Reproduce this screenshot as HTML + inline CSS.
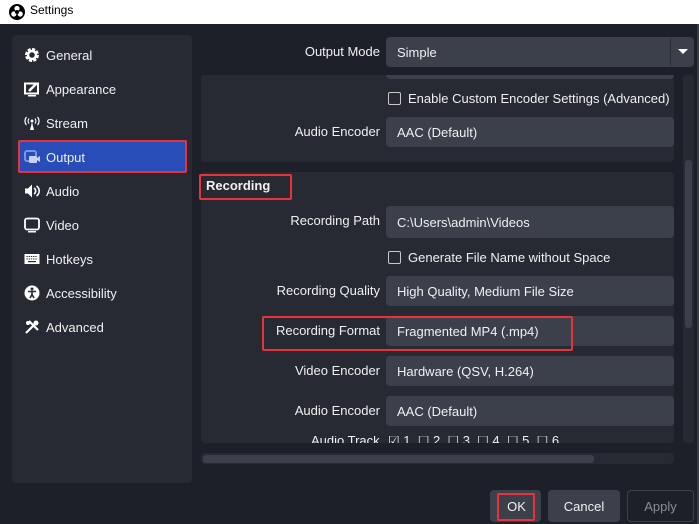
<!DOCTYPE html>
<html><head><style>
*{margin:0;padding:0;box-sizing:border-box}
body{width:699px;height:524px;background:#1e2029;font-family:"Liberation Sans",sans-serif;font-size:13px;color:#f0f0f0;position:relative;overflow:hidden}
.a{position:absolute}
.tb{left:0;top:0;width:699px;height:24px;background:#fff;color:#000;font-size:12px}
.side{left:12px;top:35px;width:180px;height:448px;background:#272a33;border-radius:4px}
.it{position:absolute;left:46px;font-size:13px}
.ic{position:absolute;left:24px;width:16px;height:16px}
.in{background:#3c404b;border-radius:4px;height:30px;padding-left:11px;line-height:30px;font-size:13px}
.lb{text-align:right;width:180px;left:200px;font-size:13px}
.grp{background:#272a33;border-radius:4px}
.cb{width:13px;height:13px;border:1px solid #c8c8c8;border-radius:2px}
.red{border:2px solid #e8333a;border-radius:2px}
.btn{background:#3c404b;border-radius:4px;text-align:center;line-height:34px;height:32px;top:490px}
</style></head><body>
<div class="a tb"><svg class="a" style="left:9px;top:4px" width="16" height="16" viewBox="0 0 16 16"><circle cx="8" cy="8" r="8" fill="#000"/><circle cx="8" cy="4.5" r="2.6" fill="#fff"/><circle cx="4.8" cy="10" r="2.6" fill="#fff"/><circle cx="11.2" cy="10" r="2.6" fill="#fff"/><circle cx="8" cy="8" r="2" fill="#000"/></svg><span class="a" style="left:30px;top:3px">Settings</span></div>
<div class="a side"></div>
<div class="a" style="left:18px;top:140px;width:169px;height:33px;background:#284cb8;border-radius:3px"></div>
<div class="a red" style="left:18px;top:140px;width:169px;height:33px"></div>
<svg class="ic" style="top:47px" viewBox="0 0 16 16"><circle cx="8" cy="8" r="5.5" fill="none" stroke="#fff" stroke-width="3" stroke-dasharray="3 1.3"/><circle cx="8" cy="8" r="4" fill="none" stroke="#fff" stroke-width="2.5"/></svg><span class="it" style="top:48px">General</span>
<svg class="ic" style="top:81px" viewBox="0 0 16 16"><rect x="1" y="2.5" width="13" height="10" fill="none" stroke="#fff" stroke-width="2"/><rect x="4" y="14" width="8" height="1.5" fill="#fff"/><path d="M5 10 L12 3" stroke="#fff" stroke-width="2.5"/></svg><span class="it" style="top:82px">Appearance</span>
<svg class="ic" style="top:115px" viewBox="0 0 16 16"><path d="M8 7 L6 15 H10 Z" fill="#fff"/><circle cx="8" cy="6" r="1.5" fill="#fff"/><path d="M5 3.5a4 4 0 0 0 0 5M11 3.5a4 4 0 0 1 0 5M2.5 2a6 6 0 0 0 0 8M13.5 2a6 6 0 0 1 0 8" stroke="#fff" fill="none" stroke-width="1.2"/></svg><span class="it" style="top:116px">Stream</span>
<svg class="ic" style="top:149px" viewBox="0 0 16 16"><rect x="1" y="2" width="11" height="10" rx="2" fill="none" stroke="#7b95e6" stroke-width="2"/><rect x="5" y="7" width="8" height="7" rx="1" fill="#c7d2f2"/><path d="M13 9l3-2v6l-3-2z" fill="#c7d2f2"/></svg><span class="it" style="top:150px">Output</span>
<svg class="ic" style="top:183px" viewBox="0 0 16 16"><path d="M1 5.5h3l4-4v13l-4-4H1z" fill="#fff"/><path d="M10 5a3.5 3.5 0 0 1 0 6M12.5 3a6 6 0 0 1 0 10" stroke="#fff" fill="none" stroke-width="1.6"/></svg><span class="it" style="top:184px">Audio</span>
<svg class="ic" style="top:217px" viewBox="0 0 16 16"><rect x="1" y="1.5" width="14" height="11" rx="2" fill="none" stroke="#fff" stroke-width="1.8"/><rect x="4" y="14" width="8" height="1.5" fill="#fff"/></svg><span class="it" style="top:218px">Video</span>
<svg class="ic" style="top:251px" viewBox="0 0 16 16"><rect x="0.5" y="3" width="15" height="10" fill="#fff"/><path d="M2.5 5.5h11M2.5 8h11" stroke="#272a33" stroke-dasharray="1.3 0.9"/><rect x="4" y="10" width="8" height="1.2" fill="#272a33"/></svg><span class="it" style="top:252px">Hotkeys</span>
<svg class="ic" style="top:285px" viewBox="0 0 16 16"><circle cx="8" cy="8" r="7.5" fill="#fff"/><circle cx="8" cy="4" r="1.5" fill="#272a33"/><path d="M4 6.5h8M8 6.5v3l-2 3.5M8 9.5l2 3.5" stroke="#272a33" stroke-width="1.6" fill="none"/></svg><span class="it" style="top:286px">Accessibility</span>
<svg class="ic" style="top:319px" viewBox="0 0 16 16"><path d="M2 14L11 5M5 2l9 9" stroke="#fff" stroke-width="2.2"/><circle cx="12" cy="4" r="2.5" fill="#fff"/><circle cx="4" cy="4" r="2" fill="#fff"/></svg><span class="it" style="top:320px">Advanced</span>

<span class="a lb" style="top:44px">Output Mode</span>
<div class="a in" style="left:386px;top:37px;width:308px;line-height:31px">Simple</div>
<div class="a" style="left:670px;top:38px;width:1px;height:28px;background:#2a2c35"></div>
<div class="a" style="left:678px;top:49px;border-left:5px solid transparent;border-right:5px solid transparent;border-top:5px solid #fff"></div>

<div class="a grp" style="left:201px;top:75px;width:473px;height:87px"></div>
<div class="a" style="left:386px;top:75px;width:288px;height:4px;background:#3c404b;border-radius:0 0 4px 4px"></div>
<div class="a cb" style="left:388px;top:92px"></div><span class="a" style="left:408px;top:91px">Enable Custom Encoder Settings (Advanced)</span>
<span class="a lb" style="top:124px">Audio Encoder</span>
<div class="a in" style="left:386px;top:117px;width:288px;line-height:31px">AAC (Default)</div>

<div class="a grp" style="left:201px;top:172px;width:473px;height:271px"></div>
<span class="a" style="left:206px;top:178px;font-weight:bold">Recording</span>
<div class="a red" style="left:199px;top:174px;width:93px;height:26px"></div>
<span class="a lb" style="top:213px">Recording Path</span>
<div class="a in" style="left:386px;top:206px;width:288px;height:32px;line-height:33px">C:\Users\admin\Videos</div>
<div class="a cb" style="left:388px;top:251px"></div><span class="a" style="left:408px;top:250px">Generate File Name without Space</span>
<span class="a lb" style="top:283px">Recording Quality</span>
<div class="a in" style="left:386px;top:276px;width:288px;line-height:31px">High Quality, Medium File Size</div>
<span class="a lb" style="top:323px">Recording Format</span>
<div class="a in" style="left:386px;top:316px;width:288px;line-height:31px">Fragmented MP4 (.mp4)</div>
<div class="a red" style="left:262px;top:316px;width:311px;height:35px"></div>
<span class="a lb" style="top:363px">Video Encoder</span>
<div class="a in" style="left:386px;top:356px;width:288px;line-height:31px">Hardware (QSV, H.264)</div>
<span class="a lb" style="top:403px">Audio Encoder</span>
<div class="a in" style="left:386px;top:396px;width:288px;line-height:31px">AAC (Default)</div>
<div class="a" style="left:201px;top:436px;width:473px;height:7px;overflow:hidden">
<span class="a" style="left:110px;top:-3px">Audio Track</span>
<span class="a" style="left:187px;top:-3px">☑ 1 &nbsp;☐ 2 &nbsp;☐ 3 &nbsp;☐ 4 &nbsp;☐ 5 &nbsp;☐ 6</span></div>

<div class="a" style="left:683px;top:75px;width:11px;height:368px;background:#272a33;border-radius:4px"></div>
<div class="a" style="left:685px;top:160px;width:7px;height:168px;background:#3c404b;border-radius:3px"></div>
<div class="a" style="left:201px;top:453px;width:473px;height:11px;background:#272a33;border-radius:4px"></div>
<div class="a" style="left:203px;top:455px;width:391px;height:8px;background:#3c404b;border-radius:3px"></div>

<div class="a btn" style="left:490px;width:51px;padding-left:2px">OK</div>
<div class="a red" style="left:497px;top:493px;width:38px;height:28px"></div>
<div class="a btn" style="left:548px;width:72px">Cancel</div>
<div class="a btn" style="left:627px;width:67px;background:#1e2029;border:1px solid #3c404b;color:#8a8c94;line-height:32px">Apply</div>
<div class="a" style="left:697px;top:24px;width:2px;height:500px;background:#3a3c44"></div>
</body></html>
